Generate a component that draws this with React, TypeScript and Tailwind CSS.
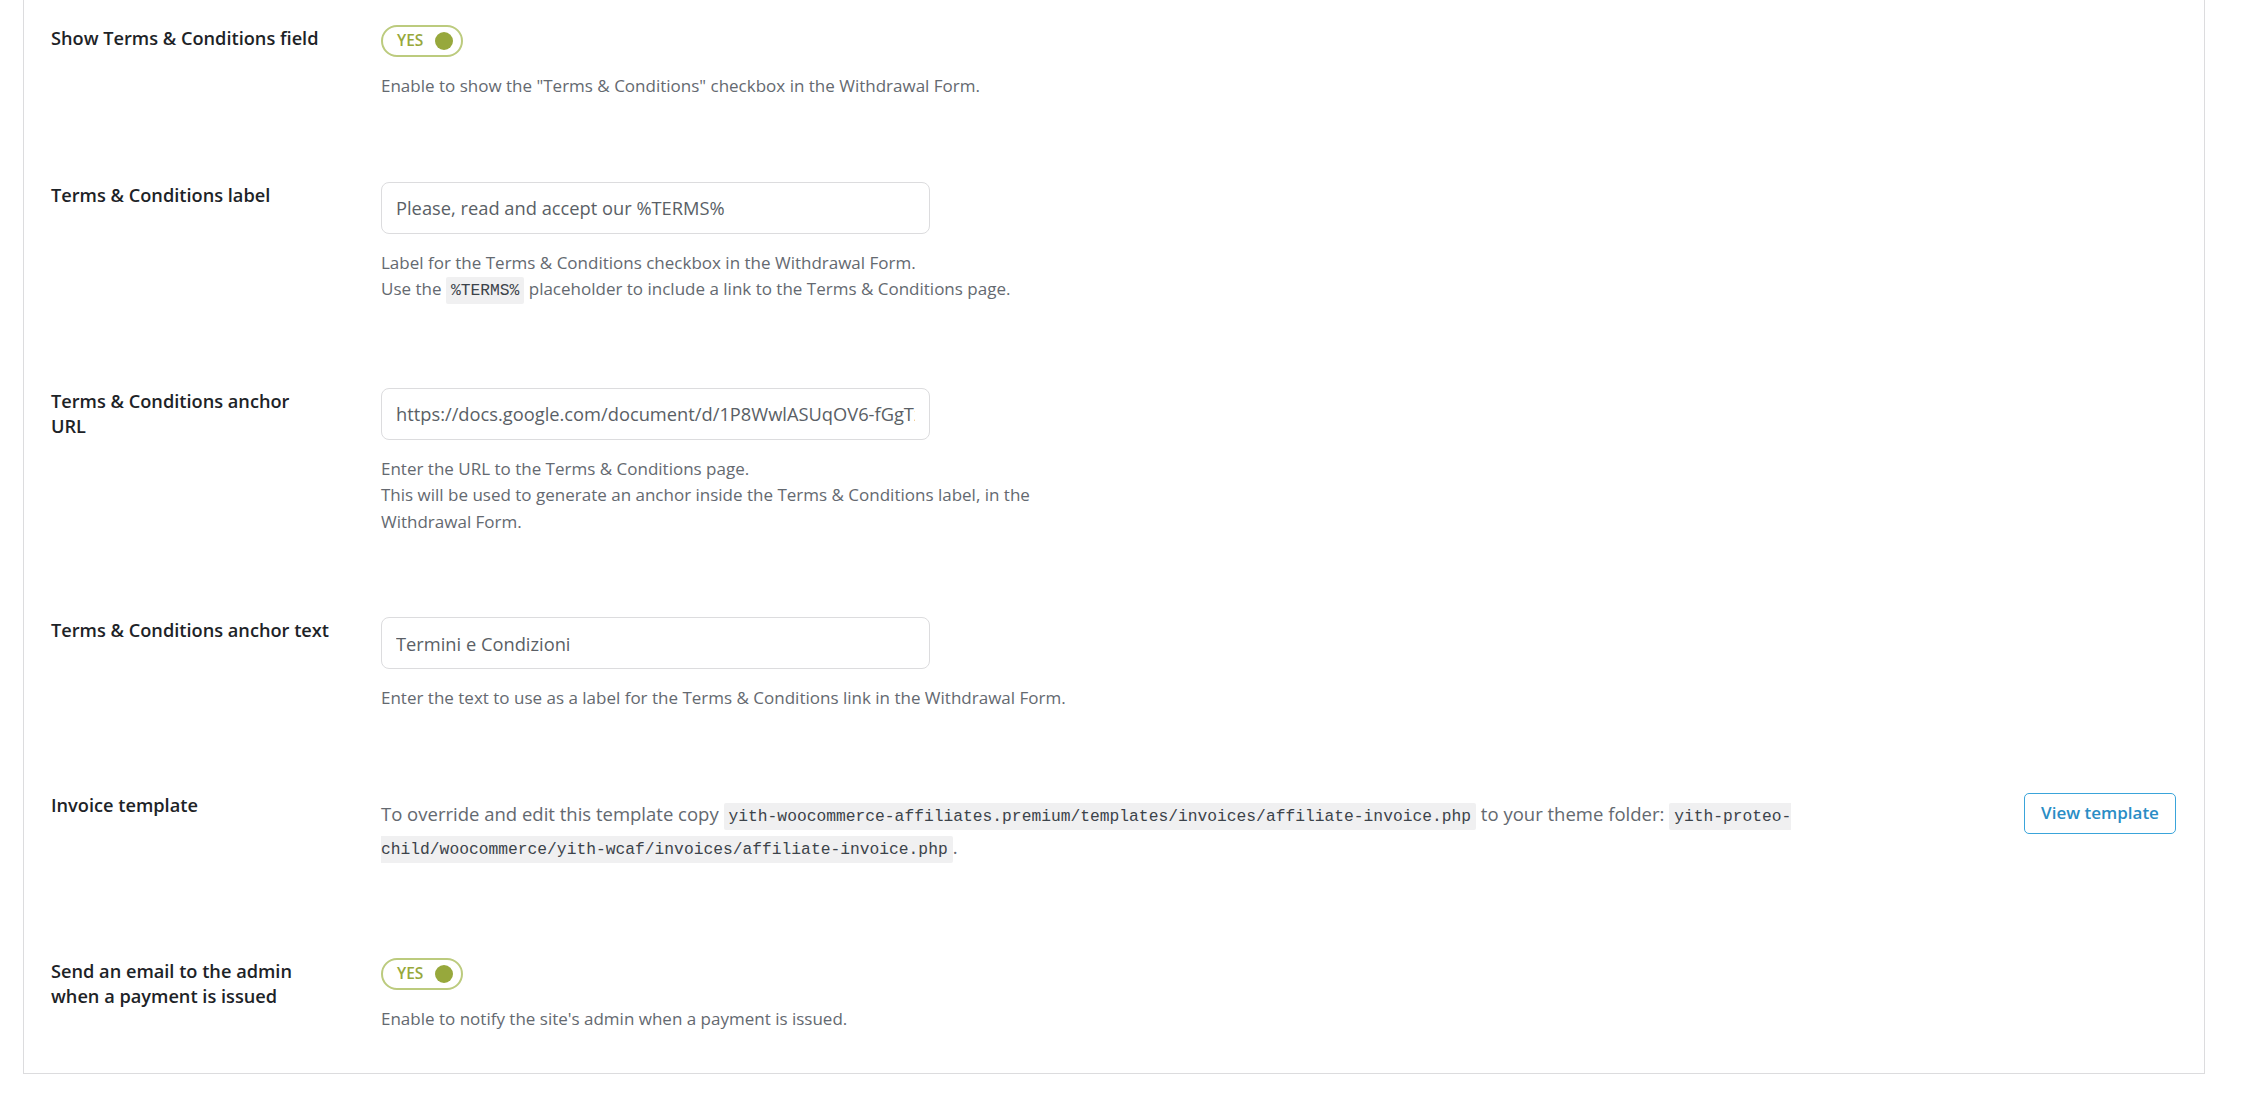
import { JSX, ReactNode } from "react";

const sans = "font-['Open_Sans','Noto_Sans',sans-serif]";
const mono = "font-['Liberation_Mono','DejaVu_Sans_Mono',monospace]";

function Code({ children }: { children: ReactNode }): JSX.Element {
  return (
    <code className={`${mono} rounded-[2px] bg-[#f0f0f1] px-[5px] py-[4px] text-[16.3px] text-[#3c434a]`}>
      {children}
    </code>
  );
}

function Toggle(): JSX.Element {
  return (
    <div className="flex h-[32px] w-[82px] items-center justify-between rounded-full border-2 border-[#bccb7e] pl-[14px] pr-[8px]">
      <span className="text-[15.5px] font-semibold text-[#97a83c]">YES</span>
      <span className="h-[18px] w-[18px] rounded-full bg-[#97a83c]" />
    </div>
  );
}

function TextInput({ value }: { value: string }): JSX.Element {
  return (
    <input
      readOnly
      defaultValue={value}
      className="h-[52px] w-[549px] rounded-[8px] border border-[#dcdcde] bg-white px-[14px] text-[18.3px] text-[#5a5f66] outline-none"
    />
  );
}

function Desc({ children }: { children: ReactNode }): JSX.Element {
  return <p className="mt-[16px] text-[17px] leading-[26.5px] text-[#646970]">{children}</p>;
}

function Row({ label, children, className }: { label: ReactNode; children: ReactNode; className: string }): JSX.Element {
  return (
    <div className={`flex ${className}`}>
      <div className="w-[357px] shrink-0 pl-[27px] pr-[40px]">
        <div className="pt-[1px] text-[18.2px] font-semibold leading-[25px] text-[#1d2327]">{label}</div>
      </div>
      <div className="min-w-0 flex-1">{children}</div>
    </div>
  );
}

export default function App(): JSX.Element {
  return (
    <main className={`${sans} min-h-screen bg-white`}>
      <div className="ml-[23px] mr-[41px] border-x border-b border-[#dcdcde] bg-white">
        <Row label="Show Terms & Conditions field" className="pt-[25px] pb-[41px]">
          <Toggle />
          <Desc>Enable to show the "Terms &amp; Conditions" checkbox in the Withdrawal Form.</Desc>
        </Row>

        <Row label="Terms & Conditions label" className="pt-[41px] pb-[41px]">
          <TextInput value="Please, read and accept our %TERMS%" />
          <Desc>
            Label for the Terms &amp; Conditions checkbox in the Withdrawal Form.
            <br />
            Use the <Code>%TERMS%</Code> placeholder to include a link to the Terms &amp; Conditions page.
          </Desc>
        </Row>

        <Row
          label={
            <>
              Terms &amp; Conditions anchor
              <br />
              URL
            </>
          }
          className="pt-[42px] pb-[40px]"
        >
          <TextInput value="https://docs.google.com/document/d/1P8WwlASUqOV6-fGgTz3kd8sXq/edit" />
          <Desc>
            Enter the URL to the Terms &amp; Conditions page.
            <br />
            This will be used to generate an anchor inside the Terms &amp; Conditions label, in the
            <br />
            Withdrawal Form.
          </Desc>
        </Row>

        <Row label="Terms & Conditions anchor text" className="pt-[42px] pb-[40px]">
          <TextInput value="Termini e Condizioni" />
          <Desc>Enter the text to use as a label for the Terms &amp; Conditions link in the Withdrawal Form.</Desc>
        </Row>

        <Row label="Invoice template" className="pt-[40px] pb-[45px]">
          <div className="flex items-start">
            <p className="w-[1440px] pt-[7px] text-[18.5px] leading-[30px] text-[#646970]">
              To override and edit this template copy{" "}
              <Code>yith-woocommerce-affiliates.premium/templates/invoices/affiliate-invoice.php</Code> to your theme
              folder: <Code>yith-proteo-child/woocommerce/yith-wcaf/invoices/affiliate-invoice.php</Code>.
            </p>
            <button className="ml-auto mr-[28px] mt-[1px] h-[41px] w-[152px] rounded-[5px] border border-[#3aa4da] bg-white text-[17px] font-semibold text-[#2a8dc5]">
              View template
            </button>
          </div>
        </Row>

        <Row
          label={
            <>
              Send an email to the admin
              <br />
              when a payment is issued
            </>
          }
          className="pt-[48px] pb-[41px]"
        >
          <Toggle />
          <Desc>Enable to notify the site's admin when a payment is issued.</Desc>
        </Row>
      </div>
    </main>
  );
}
